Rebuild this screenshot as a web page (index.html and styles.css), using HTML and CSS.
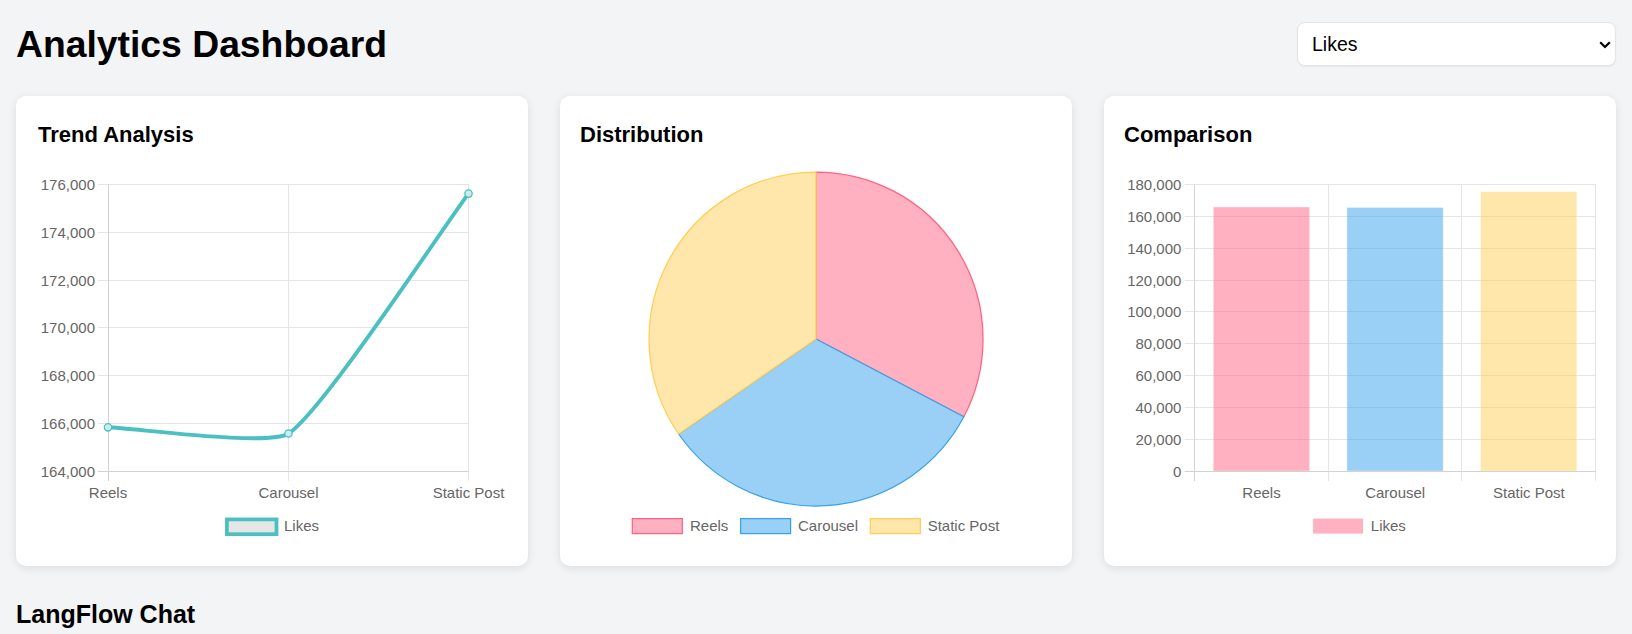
FILE: index.html
```html
<!DOCTYPE html>
<html lang="en">
<head>
<meta charset="utf-8">
<title>Analytics Dashboard</title>
<link rel="stylesheet" href="styles.css">
</head>
<body>
<div class="page">
  <header class="header">
    <h1 class="title">Analytics Dashboard</h1>
    <div class="select-wrap">
      <select class="metric-select">
        <option>Likes</option>
        <option>Shares</option>
        <option>Comments</option>
      </select>
      <svg class="chevron" width="12" height="8" viewBox="0 0 12 8"><path d="M1.2 1.2 L6 6 L10.8 1.2" fill="none" stroke="#000" stroke-width="2.2"/></svg>
    </div>
  </header>

  <section class="cards">
    <div class="card">
      <h3 class="card-title card-title-first">Trend Analysis</h3>
      <svg class="chart" viewBox="0 0 472 399" width="472" height="399">
        <g class="grid">
          <line x1="62" y1="37.5" x2="432.5" y2="37.5"/>
          <line x1="62" y1="85.5" x2="432.5" y2="85.5"/>
          <line x1="62" y1="133.5" x2="432.5" y2="133.5"/>
          <line x1="62" y1="180.5" x2="432.5" y2="180.5"/>
          <line x1="62" y1="228.5" x2="432.5" y2="228.5"/>
          <line x1="62" y1="276.5" x2="432.5" y2="276.5"/>
          <line x1="252.5" y1="37.5" x2="252.5" y2="334"/>
          <line x1="432.5" y1="37.5" x2="432.5" y2="334"/>
        </g>
        <g class="axis">
          <line x1="62" y1="324.5" x2="432.5" y2="324.5"/>
          <line x1="72.5" y1="37.5" x2="72.5" y2="334"/>
        </g>
        <g class="tick-label y-label">
          <text x="59" y="43">176,000</text>
          <text x="59" y="91">174,000</text>
          <text x="59" y="139">172,000</text>
          <text x="59" y="186">170,000</text>
          <text x="59" y="234">168,000</text>
          <text x="59" y="282">166,000</text>
          <text x="59" y="330">164,000</text>
        </g>
        <g class="tick-label x-label">
          <text x="72" y="351">Reels</text>
          <text x="252.5" y="351">Carousel</text>
          <text x="432.5" y="351">Static Post</text>
        </g>
        <path class="trend-line" d="M72 280.3 C99.1 281.2 232.2 299.7 252.5 286.5 C286.2 264.6 405.5 82.6 432.5 46.6"/>
        <circle class="trend-point" cx="72" cy="280.3" r="3.7"/>
        <circle class="trend-point" cx="252.5" cy="286.5" r="3.7"/>
        <circle class="trend-point" cx="432.5" cy="46.6" r="3.7"/>
        <rect class="legend-line-box" x="190.9" y="372.4" width="49.6" height="14.8"/>
        <text class="legend-text" x="248" y="383.8">Likes</text>
      </svg>
    </div>

    <div class="card">
      <h3 class="card-title">Distribution</h3>
      <svg class="chart" viewBox="0 0 472 399" width="472" height="399">
        <path class="slice-pink" d="M236 192 L236 25 A167 167 0 0 1 383.8 269.8 Z"/>
        <path class="slice-blue" d="M236 192 L383.8 269.8 A167 167 0 0 1 98.7 287 Z"/>
        <path class="slice-yellow" d="M236 192 L98.7 287 A167 167 0 0 1 236 25 Z"/>
        <rect class="slice-pink" x="52.3" y="371.6" width="50" height="15"/>
        <text class="legend-text" x="110" y="383.8">Reels</text>
        <rect class="slice-blue" x="160.6" y="371.6" width="50" height="15"/>
        <text class="legend-text" x="218" y="383.8">Carousel</text>
        <rect class="slice-yellow" x="290.3" y="371.6" width="50" height="15"/>
        <text class="legend-text" x="347.7" y="383.8">Static Post</text>
      </svg>
    </div>

    <div class="card">
      <h3 class="card-title">Comparison</h3>
      <svg class="chart" viewBox="0 0 472 399" width="472" height="399">
        <g class="grid">
          <line x1="60.7" y1="37.5" x2="471.7" y2="37.5"/>
          <line x1="60.7" y1="69.5" x2="471.7" y2="69.5"/>
          <line x1="60.7" y1="101.5" x2="471.7" y2="101.5"/>
          <line x1="60.7" y1="133.5" x2="471.7" y2="133.5"/>
          <line x1="60.7" y1="164.5" x2="471.7" y2="164.5"/>
          <line x1="60.7" y1="196.5" x2="471.7" y2="196.5"/>
          <line x1="60.7" y1="228.5" x2="471.7" y2="228.5"/>
          <line x1="60.7" y1="260.5" x2="471.7" y2="260.5"/>
          <line x1="60.7" y1="292.5" x2="471.7" y2="292.5"/>
          <line x1="204.5" y1="37.5" x2="204.5" y2="334"/>
          <line x1="337.5" y1="37.5" x2="337.5" y2="334"/>
          <line x1="471.5" y1="37.5" x2="471.5" y2="334"/>
        </g>
        <rect class="bar-pink" x="89.3" y="60" width="96.3" height="264"/>
        <rect class="bar-blue" x="222.9" y="60.5" width="96.3" height="263.5"/>
        <rect class="bar-yellow" x="356.5" y="44.6" width="96.3" height="279.4"/>
        <g class="axis">
          <line x1="60.7" y1="324.5" x2="471.7" y2="324.5"/>
          <line x1="70.5" y1="37.5" x2="70.5" y2="334"/>
        </g>
        <g class="tick-label y-label">
          <text x="57.4" y="43">180,000</text>
          <text x="57.4" y="75">160,000</text>
          <text x="57.4" y="107">140,000</text>
          <text x="57.4" y="139">120,000</text>
          <text x="57.4" y="170">100,000</text>
          <text x="57.4" y="202">80,000</text>
          <text x="57.4" y="234">60,000</text>
          <text x="57.4" y="266">40,000</text>
          <text x="57.4" y="298">20,000</text>
          <text x="57.4" y="330">0</text>
        </g>
        <g class="tick-label x-label">
          <text x="137.5" y="351.3">Reels</text>
          <text x="271.2" y="351.3">Carousel</text>
          <text x="404.9" y="351.3">Static Post</text>
        </g>
        <rect class="bar-legend" x="189.1" y="371.6" width="49.9" height="15"/>
        <text class="legend-text" x="246.8" y="383.8">Likes</text>
      </svg>
    </div>
  </section>

  <h2 class="chat-title">LangFlow Chat</h2>
</div>
</body>
</html>
```

FILE: styles.css
```css
* {
  box-sizing: border-box;
}

body {
  margin: 0;
  background: #f3f4f6;
  font-family: "Liberation Sans", Arial, Helvetica, sans-serif;
  color: #000;
}

.page {
  padding: 22px 16px 0;
}

.header {
  display: flex;
  justify-content: space-between;
  align-items: center;
  height: 44px;
}

.title {
  margin: 0;
  font-size: 37.3px;
  line-height: 43px;
  font-weight: 700;
}

.select-wrap {
  position: relative;
  width: 319px;
  height: 44px;
}

.metric-select {
  appearance: none;
  -webkit-appearance: none;
  width: 100%;
  height: 100%;
  padding: 0 30px 0 14px;
  border: 1px solid #e3e5e9;
  border-radius: 8px;
  background: #fff;
  box-shadow: 0 1px 2px rgba(0, 0, 0, 0.06);
  font-family: "Liberation Sans", Arial, sans-serif;
  font-size: 19.5px;
  color: #000;
  outline: none;
}

.chevron {
  position: absolute;
  right: 5px;
  top: 19px;
  pointer-events: none;
}

.cards {
  display: grid;
  grid-template-columns: repeat(3, 1fr);
  gap: 32px;
  margin-top: 30px;
}

.card {
  background: #fff;
  border-radius: 10px;
  box-shadow: 0 2px 8px rgba(0, 0, 0, 0.1);
  padding: 20px;
  height: 470px;
  display: flex;
  flex-direction: column;
}

.card-title {
  margin: 6px 0 0;
  font-size: 22px;
  line-height: 25px;
  font-weight: 700;
}

.card-title-first {
  padding-left: 2px;
}

.chart {
  display: block;
  width: 472px;
  height: 399px;
}

.grid line {
  stroke: #e5e5e5;
  stroke-width: 1;
}

.axis line {
  stroke: #d2d2d2;
  stroke-width: 1;
}

.tick-label text,
.legend-text {
  font-family: "Liberation Sans", Arial, sans-serif;
  font-size: 15px;
  fill: #666;
}

.y-label text {
  text-anchor: end;
}

.x-label text {
  text-anchor: middle;
}

.trend-line {
  fill: none;
  stroke: #4bc0c0;
  stroke-width: 3.9;
}

.trend-point {
  fill: #c9eded;
  stroke: #4bc0c0;
  stroke-width: 1.3;
}

.legend-line-box {
  fill: #e6e6e6;
  stroke: #4bc0c0;
  stroke-width: 3.75;
}

.slice-pink {
  fill: #ffb1c1;
  stroke: #ff6384;
  stroke-width: 1.25;
}

.slice-blue {
  fill: #9ad0f5;
  stroke: #36a2eb;
  stroke-width: 1.25;
}

.slice-yellow {
  fill: #ffe6aa;
  stroke: #ffce56;
  stroke-width: 1.25;
}

.bar-pink {
  fill: rgba(255, 99, 132, 0.5);
  stroke: rgba(255, 255, 255, 0.35);
  stroke-width: 1;
}

.bar-blue {
  fill: rgba(54, 162, 235, 0.5);
  stroke: rgba(255, 255, 255, 0.35);
  stroke-width: 1;
}

.bar-yellow {
  fill: rgba(255, 206, 86, 0.5);
  stroke: rgba(255, 255, 255, 0.35);
  stroke-width: 1;
}

.bar-legend {
  fill: #ffb1c1;
}

.chat-title {
  margin: 34px 0 0;
  font-size: 25px;
  font-weight: 700;
}
```
